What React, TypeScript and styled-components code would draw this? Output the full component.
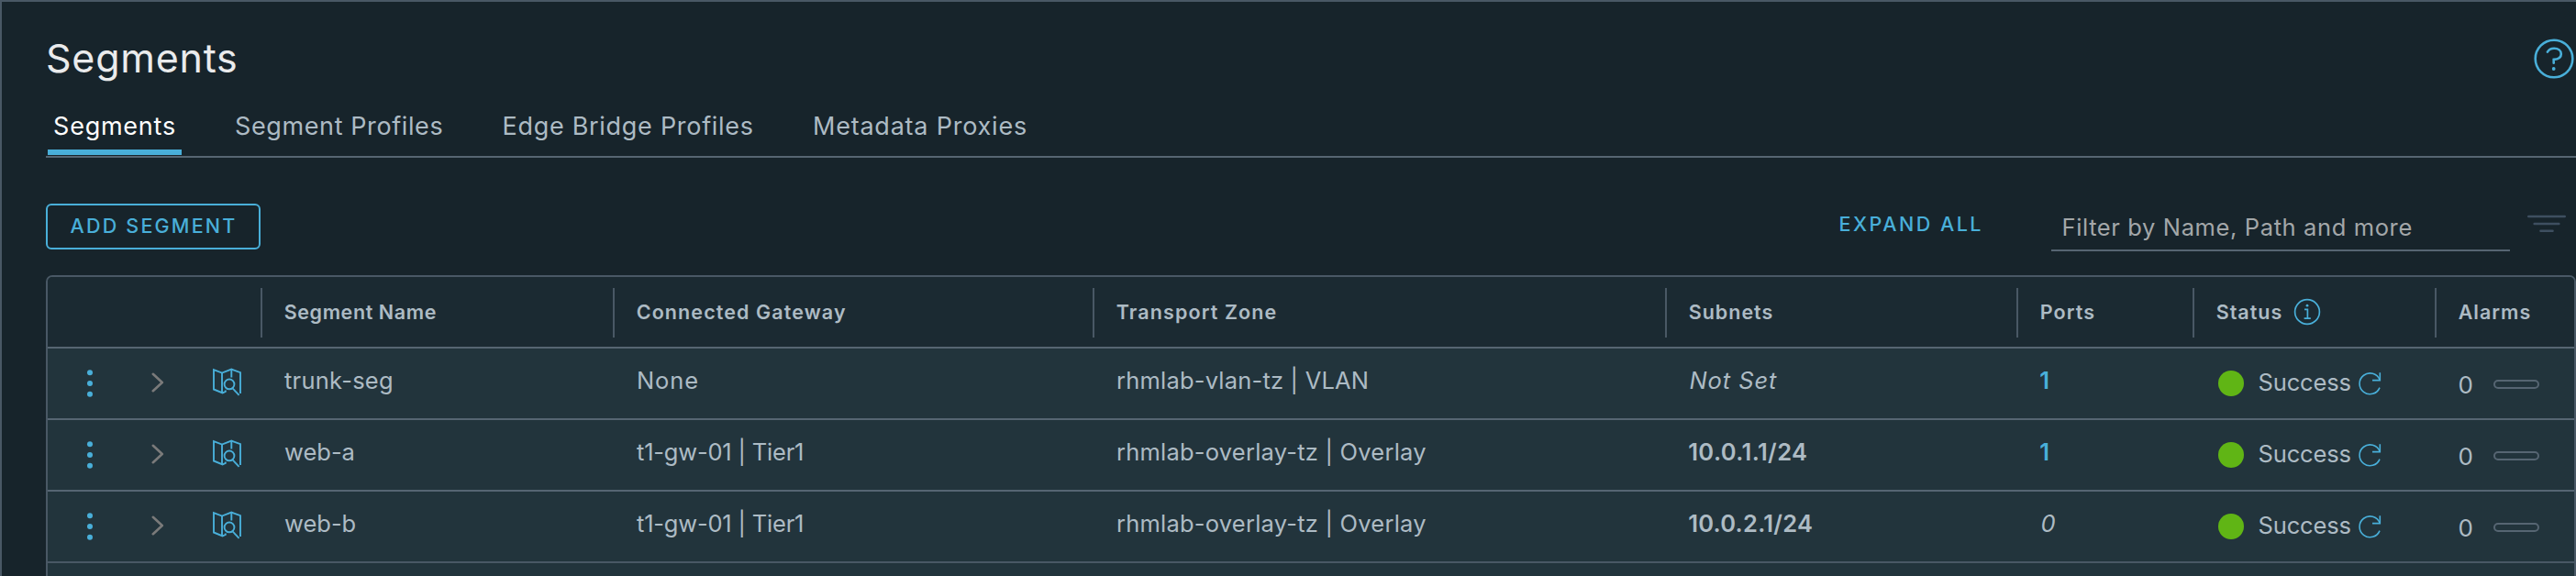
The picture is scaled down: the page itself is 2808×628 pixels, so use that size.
import React from 'react';
import styled, { createGlobalStyle } from 'styled-components';

const color = {
  page: '#17242b',
  header: '#1b2a32',
  row: '#22343c',
  frame: '#495865',
  line: '#566572',
  text: '#adbbc4',
  link: '#49afd9',
  ok: '#60b515',
};

const GlobalStyle = createGlobalStyle`
  *, *::before, *::after { box-sizing: border-box; }
  body {
    margin: 0;
    background: ${color.page};
    color: ${color.text};
    font-family: Inter, 'Open Sans', sans-serif;
    overflow: hidden;
  }
  svg { display: block; flex: none; }
`;

const Page = styled.div`
  height: 628px;
  padding-left: 48px;
  border-top: 2px solid ${color.frame};
  border-left: 2px solid ${color.frame};
  overflow: hidden;
`;

const TitleBar = styled.header`
  display: flex;
  align-items: center;
  justify-content: space-between;
  height: 109px;
  padding: 13px 2px 0 0;
`;

const Title = styled.h1`
  margin: 0;
  font-size: 43px;
  font-weight: 400;
  line-height: 1;
  letter-spacing: 0.75px;
  color: #eaebec;
`;

const HelpButton = styled.a`
  margin-top: 2px;
`;

const Tabs = styled.nav`
  display: flex;
  gap: 52px;
  height: 61px;
  padding-left: 2px;
  border-bottom: 2px solid ${color.line};
`;

const Tab = styled.a<{ $active?: boolean; $spacing: number }>`
  height: 58px;
  padding: 0 6.1px;
  border-bottom: 6px solid ${p => (p.$active ? color.link : 'transparent')};
  font-size: 27px;
  line-height: 54px;
  letter-spacing: ${p => p.$spacing}px;
  white-space: nowrap;
  color: ${p => (p.$active ? '#fff' : color.text)};
`;

const Toolbar = styled.div`
  display: flex;
  align-items: flex-start;
  height: 128px;
  padding: 50px 11px 0 0;
`;

const AddButton = styled.button`
  width: 234px;
  height: 50px;
  margin-right: auto;
  padding: 0 0 2px 1px;
  border: 2px solid ${color.link};
  border-radius: 6px;
  background: transparent;
  color: ${color.link};
  font: 500 21.5px/44px Inter, sans-serif;
  letter-spacing: 2.2px;
`;

const ExpandAll = styled.a`
  margin-right: 74px;
  color: ${color.link};
  font-size: 21.5px;
  font-weight: 500;
  line-height: 44px;
  letter-spacing: 2.5px;
`;

const Filter = styled.div`
  width: 500px;
  height: 52px;
  margin-right: 19px;
  padding: 2px 0 0 11.5px;
  border-bottom: 2px solid ${color.line};
  color: #a3a7a9;
  font-size: 25.5px;
  line-height: 48px;
  letter-spacing: 0.62px;
  white-space: nowrap;
`;

const FilterIconSlot = styled.span`
  padding-top: 11px;
`;

const Table = styled.section`
  height: 330px;
  border: 2px solid ${color.frame};
  border-radius: 7px 7px 0 0;
  background: ${color.row};
  overflow: hidden;
`;

const columns = '232px 384px 523px 624px 383px 192px 264px 152px';

const HeaderRow = styled.div`
  display: grid;
  grid-template-columns: ${columns};
  height: 78px;
  padding: 12px 0 10px;
  background: ${color.header};
  border-bottom: 2px solid ${color.line};
`;

const HeaderCell = styled.div<{ $spacing: number }>`
  display: flex;
  align-items: center;
  gap: 12px;
  padding: 0 0 2px 23.7px;
  border-left: 2px solid ${color.frame};
  font-size: 21.5px;
  font-weight: 600;
  letter-spacing: ${p => p.$spacing}px;
  white-space: nowrap;
`;

const Row = styled.div<{ $last?: boolean }>`
  display: grid;
  grid-template-columns: ${columns};
  height: 78px;
  border-bottom: 2px solid ${p => (p.$last ? color.frame : color.line)};
`;

const Cell = styled.div<{ $spacing?: number; $bold?: boolean; $italic?: boolean; $link?: boolean }>`
  display: flex;
  align-items: center;
  padding: 0 0 8px ${p => (p.$italic ? 26.5 : p.$bold ? 25.2 : 26)}px;
  font-size: 25.5px;
  font-weight: ${p => (p.$bold ? 600 : 400)};
  font-style: ${p => (p.$italic ? 'italic' : 'normal')};
  letter-spacing: ${p => p.$spacing ?? 0}px;
  white-space: pre;
  color: ${p => (p.$link ? color.link : color.text)};
`;

const Actions = styled.div`
  display: flex;
  align-items: center;
  padding-left: 42px;
`;

const ChevronSlot = styled.span`
  margin: 0 52px 2px 63px;
`;

const MapSlot = styled.span`
  margin-bottom: 4px;
`;

const StatusCell = styled.div`
  display: flex;
  align-items: center;
  padding-left: 27.5px;
  font-size: 25.5px;
`;

const Dot = styled.span`
  width: 28.5px;
  height: 28.5px;
  border-radius: 50%;
  background: ${color.ok};
`;

const StatusLabel = styled.span`
  margin: 0 8px 3px 15.5px;
  letter-spacing: -0.15px;
`;

const AlarmCell = styled.div`
  display: flex;
  align-items: center;
  padding: 2px 0 0 25.5px;
  font-size: 26px;
`;

const Pill = styled.span`
  width: 50px;
  height: 10px;
  margin-left: 22px;
  border: 2px solid ${color.line};
  border-radius: 5px;
`;

const HelpIcon = () => (
  <svg width="44" height="44" viewBox="0 0 44 44" fill="none" stroke={color.link} strokeWidth="2.6" strokeLinecap="round">
    <circle cx="22" cy="22" r="20.3" />
    <path d="M14.9 14.6C16.6 11.9 19 10.8 22.2 10.8C26.8 10.8 29.8 13.4 29.8 17C29.8 20.6 26.6 22.6 21.7 22.9V26.8" />
    <circle cx="21.7" cy="33" r="1.9" fill={color.link} stroke="none" />
  </svg>
);

const FilterIcon = () => (
  <svg width="42" height="20" viewBox="0 0 42 20" stroke="#3e4f60" strokeWidth="2.4" strokeLinecap="round">
    <path d="M1.2 3H40.8M7.6 11H34.4M14.4 18.8H27.6" />
  </svg>
);

const InfoIcon = () => (
  <svg width="30" height="30" viewBox="0 0 30 30" fill="none" stroke={color.link} strokeWidth="1.7">
    <circle cx="15" cy="15" r="13.4" />
    <path d="M12 12.4H15.4V22.2M11.6 22.2H18.8" />
    <circle cx="15" cy="8.2" r="1.4" fill={color.link} stroke="none" />
  </svg>
);

const KebabIcon = () => (
  <svg width="8" height="30" viewBox="0 0 8 30" fill={color.link}>
    <circle cx="4" cy="3.3" r="3" />
    <circle cx="4" cy="15" r="3" />
    <circle cx="4" cy="26.7" r="3" />
  </svg>
);

const ChevronIcon = () => (
  <svg width="14" height="22" viewBox="0 0 14 22" fill="none" stroke="#7a7a7a" strokeWidth="2.6" strokeLinecap="round" strokeLinejoin="round">
    <path d="M1.8 1.8L11.8 11L1.8 20.2" />
  </svg>
);

const MapIcon = () => (
  <svg width="34" height="32" viewBox="0 0 34 32" fill="none" stroke={color.link} strokeWidth="1.9">
    <path d="M31 29V6.2L21.3 2.6L11 6.6L2 3.1V24.5L11.6 28.4L14.8 27V25.4" />
    <path d="M11 6.6V28M21.3 2.6V11.6" />
    <circle cx="19" cy="18.9" r="5.4" />
    <path d="M22.8 23.6L29.6 30.8" />
  </svg>
);

const RefreshIcon = () => (
  <svg width="25" height="26" viewBox="0 0 25 26" fill="none" stroke={color.link} strokeWidth="1.6">
    <path d="M23 9A11.4 11.4 0 1 0 23 17.6" />
    <path d="M23.3 1.2V9.6H15" />
  </svg>
);

const headers: { label: string; spacing: number; info?: boolean }[] = [
  { label: 'Segment Name', spacing: 0.6 },
  { label: 'Connected Gateway', spacing: 1.1 },
  { label: 'Transport Zone', spacing: 1.12 },
  { label: 'Subnets', spacing: 1 },
  { label: 'Ports', spacing: 1.1 },
  { label: 'Status', spacing: 1, info: true },
  { label: 'Alarms', spacing: 1 },
];

type Value = { text: string; spacing: number };
type Segment = { name: Value; gateway: Value; zone: Value; subnet: Value | null; ports: number };

const overlay: Value = { text: 'rhmlab-overlay-tz | Overlay', spacing: 0.22 };
const tier1: Value = { text: 't1-gw-01 | Tier1', spacing: -0.2 };

const segments: Segment[] = [
  {
    name: { text: 'trunk-seg', spacing: 0.25 },
    gateway: { text: 'None', spacing: 0.9 },
    zone: { text: 'rhmlab-vlan-tz | VLAN', spacing: 0.2 },
    subnet: null,
    ports: 1,
  },
  { name: { text: 'web-a', spacing: 0 }, gateway: tier1, zone: overlay, subnet: { text: '10.0.1.1/24', spacing: 0.4 }, ports: 1 },
  { name: { text: 'web-b', spacing: 0 }, gateway: tier1, zone: overlay, subnet: { text: '10.0.2.1/24', spacing: 0.25 }, ports: 0 },
];

const SegmentRow = ({ segment, last }: { segment: Segment; last: boolean }) => (
  <Row $last={last}>
    <Actions>
      <KebabIcon />
      <ChevronSlot><ChevronIcon /></ChevronSlot>
      <MapSlot><MapIcon /></MapSlot>
    </Actions>
    <Cell $spacing={segment.name.spacing}>{segment.name.text}</Cell>
    <Cell $spacing={segment.gateway.spacing}>{segment.gateway.text}</Cell>
    <Cell $spacing={segment.zone.spacing}>{segment.zone.text}</Cell>
    {segment.subnet ? (
      <Cell $bold $spacing={segment.subnet.spacing}>{segment.subnet.text}</Cell>
    ) : (
      <Cell $italic $spacing={0.9}>Not Set</Cell>
    )}
    <Cell $bold={segment.ports > 0} $link={segment.ports > 0} $italic={segment.ports === 0}>{segment.ports}</Cell>
    <StatusCell>
      <Dot />
      <StatusLabel>Success</StatusLabel>
      <RefreshIcon />
    </StatusCell>
    <AlarmCell>0<Pill /></AlarmCell>
  </Row>
);

export default function App() {
  return (
    <>
      <GlobalStyle />
      <Page>
        <TitleBar>
          <Title>Segments</Title>
          <HelpButton><HelpIcon /></HelpButton>
        </TitleBar>
        <Tabs>
          <Tab $active $spacing={0.75}>Segments</Tab>
          <Tab $spacing={0.6}>Segment Profiles</Tab>
          <Tab $spacing={0.71}>Edge Bridge Profiles</Tab>
          <Tab $spacing={0.78}>Metadata Proxies</Tab>
        </Tabs>
        <Toolbar>
          <AddButton>ADD SEGMENT</AddButton>
          <ExpandAll>EXPAND ALL</ExpandAll>
          <Filter>Filter by Name, Path and more</Filter>
          <FilterIconSlot><FilterIcon /></FilterIconSlot>
        </Toolbar>
        <Table>
          <HeaderRow>
            <span />
            {headers.map(h => (
              <HeaderCell key={h.label} $spacing={h.spacing}>
                {h.label}
                {h.info && <InfoIcon />}
              </HeaderCell>
            ))}
          </HeaderRow>
          {segments.map((s, i) => (
            <SegmentRow key={s.name.text} segment={s} last={i === segments.length - 1} />
          ))}
        </Table>
      </Page>
    </>
  );
}
